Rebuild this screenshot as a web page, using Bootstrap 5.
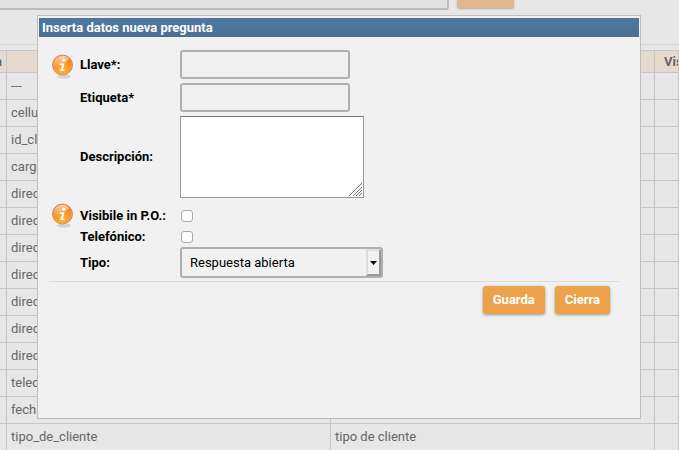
<!DOCTYPE html>
<html lang="es">
<head>
<meta charset="utf-8">
<meta name="viewport" content="width=device-width, initial-scale=1">
<title>Inserta datos nueva pregunta</title>
<link href="https://cdn.jsdelivr.net/npm/bootstrap@5.3.0/dist/css/bootstrap.min.css" rel="stylesheet">
<style>
  body { font-family: Roboto, "Liberation Sans", sans-serif; font-size: 13px; line-height: 20px; background: #e7e7e7; color: #000; min-height: 100vh; }
  .backdrop-page { color: #666; }
  .search-bar { height: 45px; padding-right: 165px; gap: 8px; border-bottom: 1px solid #d4d4d4; }
  .search-box { height: 10px; border: 2px solid #bbb; border-top: 0; border-radius: 0 0 3px 3px; background: #e1e1e1; margin-left: -8px; min-width: 0; }
  .search-go { width: 57px; height: 8px; border: 0; border-radius: 0 0 3px 3px; background: #e0b88b; box-shadow: 0 1px 2px #aaa; }
  .data-grid { margin: 5px 0 0 -60px; width: calc(100% + 60px); table-layout: fixed; border-collapse: collapse; }
  .data-grid th, .data-grid td { border: 1px solid #c6c6c6; height: 27px; padding: 0 4px; overflow: hidden; white-space: nowrap; }
  .data-grid th { height: 22px; background: #e4dbce; font-weight: 700; padding-left: 9px; }
  .data-grid .edge { width: 66px; text-align: right; }
  .data-grid .tail { width: 24px; }
  .panel { top: 15px; left: 37px; right: 38px; padding: 2px 1px 0; min-height: 404px; background: #f1f1f1; border: 1px solid #c3beb4; }
  .panel-title { background: linear-gradient(#4f77a1, #4a6f93); color: #fff; font-size: 13px; line-height: 19px; padding: 0 3px; font-weight: 700; }
  .panel-body { padding: 13px 20px 0 10px; }
  .form-grid { display: grid; grid-template-columns: 31px 100px minmax(0, 1fr); align-items: center; padding-bottom: 3px; border-bottom: 1px solid #dadada; }
  .form-grid label { font-weight: 700; }
  .info-icon { margin: -4px 0 -4px 3px; }
  .line-field { height: 33px; }
  .check-field { height: 21px; }
  .form-grid .text-box { width: 170px; height: 29px; padding: 0 8px; border: 2px solid #b0b0b0; border-radius: 3px; background: #f1f1f1; display: block; }
  .area-wrap { width: 184px; height: 82px; margin-bottom: 7px; }
  .area-wrap textarea { width: 100%; height: 100%; display: block; border: 1px solid #999; border-top-color: #777; background: #fff; resize: none; }
  .grip { right: 2px; bottom: 2px; pointer-events: none; }
  .tick { appearance: none; display: block; width: 12px; height: 12px; margin: 0 0 0 1px; border: 1px solid #aaa; border-radius: 3px; background: #fff; }
  .tick:checked { background: #4f77a1; }
  .select-wrap { width: 203px; height: 31px; }
  .select-wrap select { appearance: none; width: 100%; height: 100%; padding: 0 20px 0 8px; border: 2px solid #b0b0b0; border-radius: 3px; background: #f1f1f1; color: #000; }
  .drop-face { top: 2px; right: 2px; bottom: 2px; width: 15px; background: #f1f1f1; border: 2px solid; border-color: #ddd #999 #999 #ddd; pointer-events: none; }
  .actions { padding: 4px 9px 0; gap: 10px; }
  .action { height: 28px; padding: 0 10px; line-height: 20px; font-size: 13px; font-weight: 700; color: #fff; background: #eba24b; border: 0; border-radius: 3px; box-shadow: 0 1px 3px #999; }
  .action:hover { color: #fff; background: #dc9138; }
</style>
<script src="https://cdn.jsdelivr.net/npm/bootstrap@5.3.0/dist/js/bootstrap.bundle.min.js"></script>
</head>
<body class="position-relative overflow-hidden">
<svg width="0" height="0" class="position-absolute" aria-hidden="true">
  <defs>
    <radialGradient id="orb" cx="50%" cy="72%" r="65%">
      <stop offset="0" stop-color="#ffb53c"/><stop offset=".6" stop-color="#f7942a"/><stop offset="1" stop-color="#df7419"/>
    </radialGradient>
    <linearGradient id="shine" x2="0" y2="1"><stop offset="0" stop-color="#fff" stop-opacity=".65"/><stop offset="1" stop-color="#fff" stop-opacity=".1"/></linearGradient>
    <symbol id="info" viewBox="0 0 24 26">
      <ellipse cx="12" cy="22.5" rx="7" ry="2" fill="#000" opacity=".12"/>
      <circle cx="10.5" cy="11" r="10" fill="url(#orb)" stroke="#d87b2c" stroke-width=".8"/>
      <circle cx="10.5" cy="11" r="9" fill="none" stroke="#f9b263" stroke-width=".6"/>
      <path d="M2 12A8.600 8.600 0 0 1 17 5Q13 11 2 12Z" fill="url(#shine)"/>
      <circle cx="11.600" cy="6" r="1.600" fill="#fff"/>
      <path d="M8 9.500h4.300l-1.400 6.200h1.700l-.4 1.400H7.700l.4-1.400h.9l1-4.700H7.700Z" fill="#fff"/>
    </symbol>
  </defs>
</svg>
<main class="backdrop-page">
  <div class="search-bar d-flex align-items-start">
    <input class="search-box flex-grow-1" type="text" aria-label="Buscar">
    <button class="search-go" type="button" aria-label="Buscar"></button>
  </div>
  <table class="data-grid">
    <thead><tr><th class="edge">a</th><th></th><th></th><th class="tail">Visible</th></tr></thead>
    <tbody>
      <tr><td></td><td>---</td><td></td><td></td></tr>
      <tr><td></td><td>cellulare</td><td></td><td></td></tr>
      <tr><td></td><td>id_cliente</td><td></td><td></td></tr>
      <tr><td></td><td>cargo</td><td></td><td></td></tr>
      <tr><td></td><td>direccion</td><td></td><td></td></tr>
      <tr><td></td><td>direccion</td><td></td><td></td></tr>
      <tr><td></td><td>direccion</td><td></td><td></td></tr>
      <tr><td></td><td>direccion</td><td></td><td></td></tr>
      <tr><td></td><td>direccion</td><td></td><td></td></tr>
      <tr><td></td><td>direccion</td><td></td><td></td></tr>
      <tr><td></td><td>direccion</td><td></td><td></td></tr>
      <tr><td></td><td>telecom</td><td></td><td></td></tr>
      <tr><td></td><td>fecha</td><td></td><td></td></tr>
      <tr><td></td><td>tipo_de_cliente</td><td>tipo de cliente</td><td></td></tr>
    </tbody>
  </table>
</main>
<section class="panel position-absolute" role="dialog" aria-labelledby="panelTitle">
  <h1 class="panel-title m-0" id="panelTitle">Inserta datos nueva pregunta</h1>
  <form class="panel-body">
    <div class="form-grid">
      <svg width="24" height="26" class="info-icon" aria-hidden="true"><use href="#info"/></svg>
      <label class="pb-1" for="llave">Llave*:</label>
      <div class="line-field"><input class="text-box" id="llave" type="text"></div>
      <span></span>
      <label class="pb-1" for="etiqueta">Etiqueta*</label>
      <div class="line-field"><input class="text-box" id="etiqueta" type="text"></div>
      <span></span>
      <label class="pb-2" for="descripcion">Descripción:</label>
      <div class="area-wrap position-relative">
        <textarea id="descripcion"></textarea>
        <svg class="grip position-absolute" width="13" height="13" aria-hidden="true"><path d="M0 13L13 0M4 13L13 4M7 13L13 7M10 13L13 10" stroke="#777" fill="none"/></svg>
      </div>
      <svg width="24" height="26" class="info-icon" aria-hidden="true"><use href="#info"/></svg>
      <label for="visible">Visibile in P.O.:</label>
      <div class="check-field d-flex align-items-center"><input class="tick" id="visible" type="checkbox"></div>
      <span></span>
      <label for="telefonico">Telefónico:</label>
      <div class="check-field d-flex align-items-center"><input class="tick" id="telefonico" type="checkbox"></div>
      <span></span>
      <label for="tipo">Tipo:</label>
      <div class="select-wrap position-relative">
        <select id="tipo"><option>Respuesta abierta</option></select>
        <span class="drop-face position-absolute d-flex align-items-center justify-content-center"><svg width="7" height="4" aria-hidden="true"><path d="M0 0h7L3.500 4Z"/></svg></span>
      </div>
    </div>
    <div class="actions d-flex justify-content-end">
      <button class="btn action" type="button">Guarda</button>
      <button class="btn action" type="button">Cierra</button>
    </div>
  </form>
</section>
</body>
</html>
